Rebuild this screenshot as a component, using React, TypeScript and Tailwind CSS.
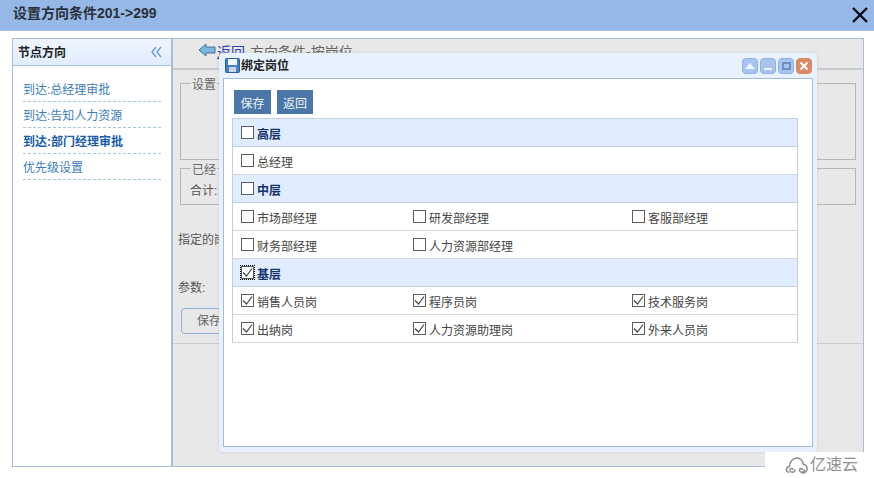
const font = { fontFamily: "'Liberation Sans', 'Noto Sans CJK SC', sans-serif" };

function Check({ on, focus }: { on?: boolean; focus?: boolean }) {
  return (
    <span className={`w-[13px] h-[13px] shrink-0 border border-[#5c5c5c] bg-white flex items-center justify-center ${focus ? "outline-1 outline-dotted outline-black" : ""}`}>
      {on && (
        <svg width="11" height="11" viewBox="0 0 11 11" fill="none">
          <path d="M1 5.5 L4.5 9 L10 1.5" stroke="#444" strokeWidth="1.2" />
        </svg>
      )}
    </span>
  );
}

function GroupRow({ label, focus, on }: { label: string; focus?: boolean; on?: boolean }) {
  return (
    <div className="h-[28px] bg-[#e0ecff] border-b border-[#c5cfdc] pl-[8px] flex items-center gap-[3px]">
      <Check focus={focus} on={on} />
      <span className="mt-[4px] text-[12px] font-bold text-[#15326b]">{label}</span>
    </div>
  );
}

function ItemRow({ items, on }: { items: string[]; on?: boolean }) {
  return (
    <div className="h-[28px] border-b border-[#d5d5d5] pl-[8px] grid grid-cols-[172px_219px_1fr] items-center text-[12px] text-[#444]">
      {items.map((t) => (
        <div key={t} className="flex items-center gap-[3px]">
          <Check on={on} />
          <span className="mt-[4px]">{t}</span>
        </div>
      ))}
    </div>
  );
}

function ToolBtn({ children, red }: { children: React.ReactNode; red?: boolean }) {
  return (
    <div className={`w-[16px] h-[16px] rounded-[4px] border flex items-center justify-center ${red ? "bg-[#d98a63] border-[#d98a63]" : "bg-[#a9c4ef] border-[#8fb0e0]"}`}>
      {children}
    </div>
  );
}

export default function App() {
  return (
    <div style={font} className="relative w-[874px] h-[478px] bg-white overflow-hidden text-[12px]">
      {/* top bar */}
      <div className="h-[31px] bg-[#95b8e7] border-b border-[#a9c3e6] flex items-center justify-between pl-[13px] pr-[5px]">
        <span className="mb-[4px] text-[14px] font-bold text-[#2b3038]">设置方向条件201-&gt;299</span>
        <svg width="18" height="18" viewBox="0 0 18 18" fill="none">
          <path d="M2 2 L16 16 M16 2 L2 16" stroke="#0a0a14" strokeWidth="2.4" />
        </svg>
      </div>

      <div className="mx-[12px] mt-[7px] h-[429px] w-[852px] border border-[#a9bcd8] flex">
        {/* left nav */}
        <div className="w-[160px] border-r-2 border-[#a9bcd8] flex flex-col shrink-0">
          <div className="h-[27px] bg-gradient-to-b from-[#eff5ff] to-[#e0ecff] border-b border-[#a9c3e6] flex items-center justify-between pl-[5px] pr-[9px]">
            <span className="mt-[2px] font-bold text-[#222]">节点方向</span>
            <svg width="11" height="12" viewBox="0 0 11 12" fill="none">
              <path d="M5 1 L1 6 L5 11 M10 1 L6 6 L10 11" stroke="#6f9bd8" strokeWidth="1.4" />
            </svg>
          </div>
          <div className="px-[10px] pt-[10px]">
            {["到达:总经理审批", "到达:告知人力资源", "到达:部门经理审批", "优先级设置"].map((t, i) => (
              <div key={t} className={`h-[26px] leading-[29px] border-b border-dashed border-[#a5c8d8] ${i === 2 ? "font-bold text-[#1b5ca8]" : "text-[#3b7cba]"}`}>
                {t}
              </div>
            ))}
          </div>
        </div>

        {/* page behind the dialog */}
        <div className="flex-1 bg-[#e8e8e8] flex flex-col">
          <div className="h-[31px] border-b-2 border-[#c8ccd2] pl-[25px] pt-[3px] flex items-start gap-[1px]">
            <svg width="18" height="14" viewBox="0 0 18 14" className="mt-[1px]">
              <path d="M1 7 L8 1 V4 H17 V10 H8 V13 Z" fill="#7ab8e0" stroke="#4a6f8f" />
            </svg>
            <span className="text-[#2a3fb0] text-[14px] underline">返回</span>
            <span className="ml-[4px] text-[#666] text-[14px]">方向条件-按岗位</span>
          </div>
          <div className="flex-1 px-[7px] pt-[4px]">
            <fieldset className="h-[86px] border border-[#b5b5b5] pl-[10px] pr-[6px]">
              <legend className="h-[18px] leading-[22px] px-[1px] text-[#666]">设置</legend>
            </fieldset>
            <fieldset className="h-[46px] -mt-[1px] border border-[#b5b5b5] pl-[10px] pr-[6px]">
              <legend className="h-[18px] leading-[22px] px-[1px] text-[#666]">已经</legend>
              <span className="block mt-[5px] -ml-[1px] text-[#555]">合计:</span>
            </fieldset>
            <div className="mt-[26px] -ml-[2px] text-[#555]">指定的岗位</div>
            <div className="mt-[30px] -ml-[2px] text-[#555]">参数:</div>
            <button className="mt-[11px] ml-[1px] w-[60px] h-[26px] border border-[#8fb0d8] rounded-[4px] text-[#666] text-left pl-[15px]">保存</button>
          </div>
          <div className="h-[123px] border-t border-[#c8ccd2]" />
        </div>
      </div>

      {/* dialog */}
      <div className="absolute left-[219px] top-[53px] w-[598px] h-[399px] bg-[#e8f1fe] rounded-[4px] shadow-[0_0_3px_rgba(150,150,150,0.35)] flex flex-col pl-[4px] pr-[4px] pb-[5px]">
        <div className="h-[25px] shrink-0 flex items-center justify-between pl-[2px] pr-[1px]">
          <div className="flex items-center gap-[1px]">
            <svg width="15" height="15" viewBox="0 0 15 15">
              <rect x="0.5" y="0.5" width="14" height="14" rx="1" fill="#3f7fc4" stroke="#2f5f9a" />
              <rect x="3" y="1" width="9" height="6" fill="#f4f8fc" />
              <rect x="4" y="9" width="7" height="5" fill="#c9d8e8" />
            </svg>
            <span className="font-bold text-[#222]">绑定岗位</span>
          </div>
          <div className="flex gap-[2px]">
            <ToolBtn>
              <svg width="10" height="6" viewBox="0 0 10 6"><path d="M5 0 L10 6 H0 Z" fill="#eef4ff" /></svg>
            </ToolBtn>
            <ToolBtn>
              <div className="w-[8px] h-[2px] bg-[#eef4ff] mt-[6px]" />
            </ToolBtn>
            <ToolBtn>
              <div className="w-[9px] h-[8px] border-2 border-[#6d8fc4]" />
            </ToolBtn>
            <ToolBtn red>
              <svg width="10" height="10" viewBox="0 0 10 10"><path d="M1.5 1.5 L8.5 8.5 M8.5 1.5 L1.5 8.5" stroke="#fff" strokeWidth="2" /></svg>
            </ToolBtn>
          </div>
        </div>
        <div className="flex-1 bg-white border border-[#9fbbdd] pl-[8px] pr-[14px] pt-[11px]">
          <div className="flex gap-[6px] pl-[2px] mb-[4px]">
            <div className="w-[37px] h-[24px] pt-[3px] bg-[#4a76a8] text-[#eef3fa] flex items-center justify-center">保存</div>
            <div className="w-[36px] h-[24px] pt-[3px] bg-[#4a76a8] text-[#eef3fa] flex items-center justify-center">返回</div>
          </div>
          <div className="border-x border-t border-[#c5cfdc]">
            <GroupRow label="高层" />
            <ItemRow items={["总经理"]} />
            <GroupRow label="中层" />
            <ItemRow items={["市场部经理", "研发部经理", "客服部经理"]} />
            <ItemRow items={["财务部经理", "人力资源部经理"]} />
            <GroupRow label="基层" focus on />
            <ItemRow items={["销售人员岗", "程序员岗", "技术服务岗"]} on />
            <ItemRow items={["出纳岗", "人力资源助理岗", "外来人员岗"]} on />
          </div>
        </div>
      </div>

      {/* watermark */}
      <div className="absolute right-0 bottom-0 w-[109px] h-[26px] bg-white flex items-center pl-[20px] gap-[2px]">
        <svg width="23" height="17" viewBox="0 0 23 17" fill="none" stroke="#8a8a8a" strokeWidth="1.4">
          <path d="M4 15.5 C0.5 14.5 0.5 10 4.5 9.5 C4.5 5 8 1 12 1 C15.5 1 18 4 18 7 C21 7.5 22.5 10 22 12.5 C21.5 15 19 16 17 16" />
          <path d="M8 13 C8 11 5 11 5 13 C5 16 10 16 10 12.5" />
          <path d="M17.5 13 C17.5 11 14.5 11 14.5 13 C14.5 16 19.5 16 19.5 12.5" />
        </svg>
        <span className="text-[16px] text-[#909090] leading-none">亿速云</span>
      </div>
    </div>
  );
}
